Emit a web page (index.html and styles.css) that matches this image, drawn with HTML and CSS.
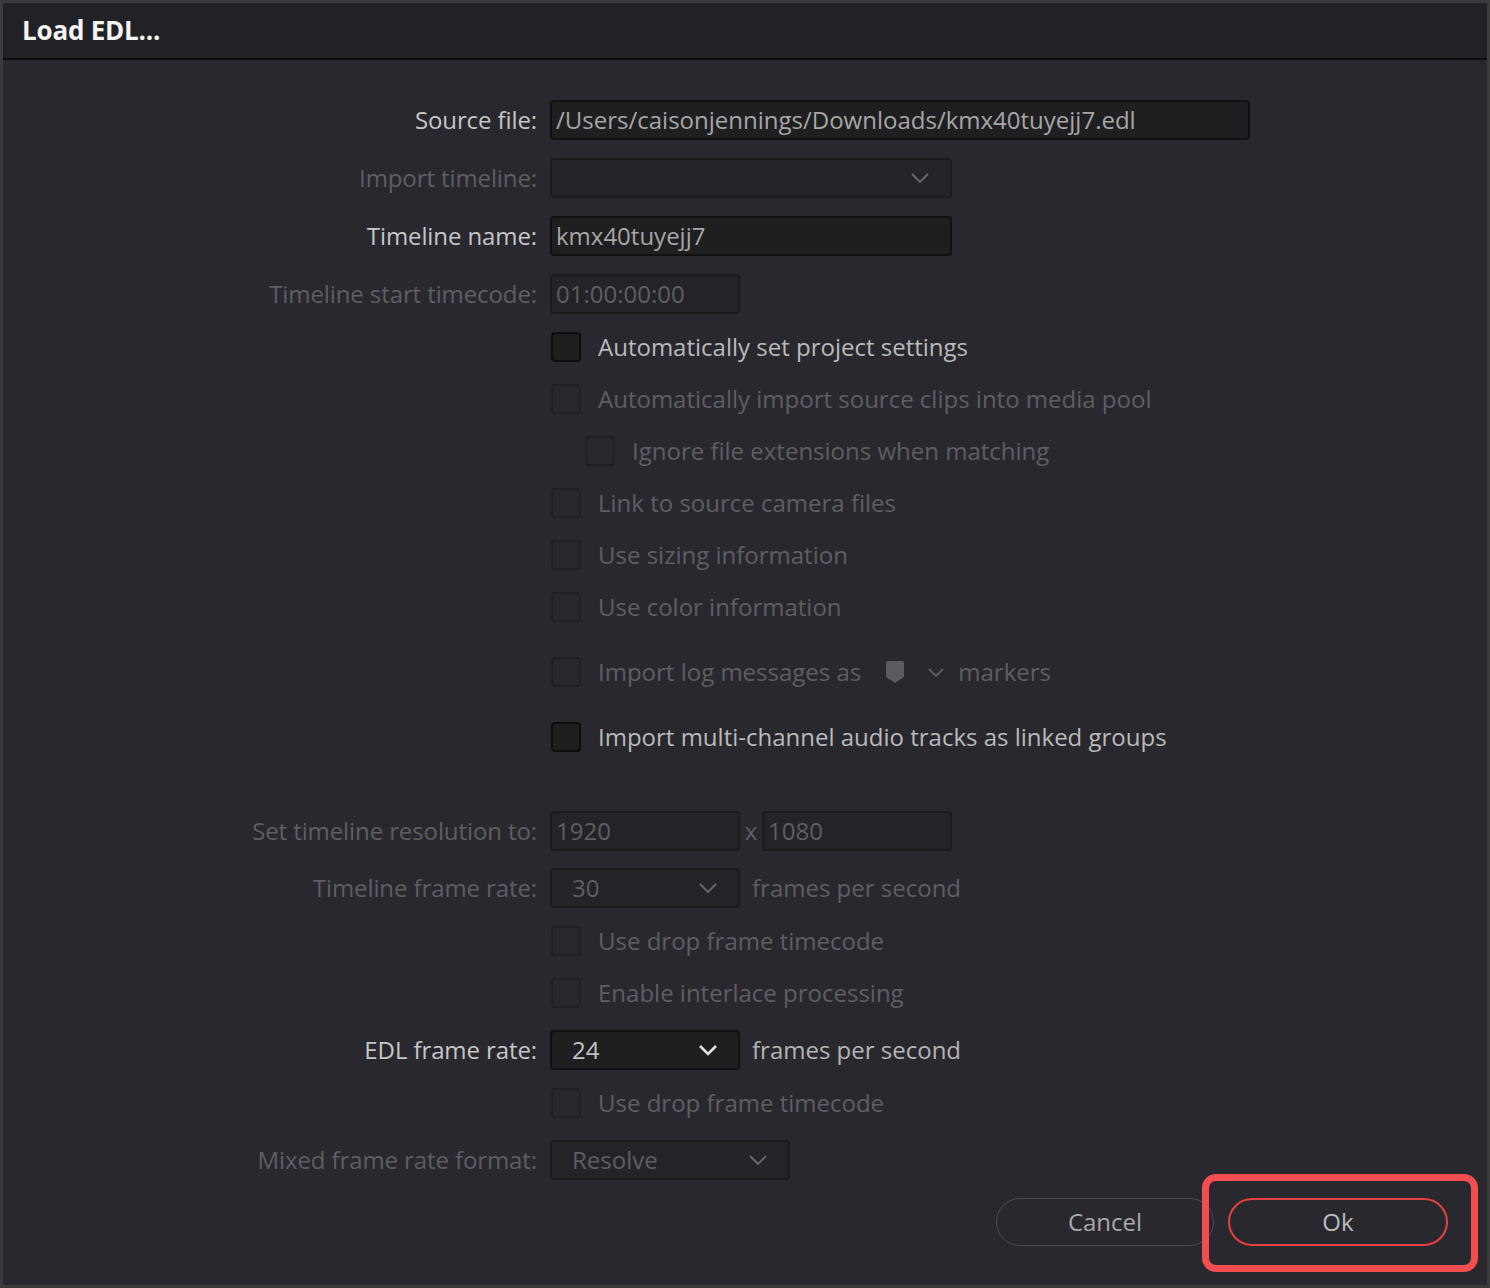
FILE: index.html
```html
<!DOCTYPE html>
<html>
<head>
<meta charset="utf-8">
<link rel="stylesheet" href="styles.css">
</head>
<body>
<div class="window">
  <div class="titlebar"><span class="title">Load EDL...</span></div>
  <div class="content">
    <div class="row field-row r-source">
      <div class="label">Source file:</div>
      <div class="input w-long">/Users/caisonjennings/Downloads/kmx40tuyejj7.edl</div>
    </div>
    <div class="row field-row r-gap">
      <div class="label dim">Import timeline:</div>
      <div class="select w-mid disabled"><span></span>
        <svg class="chev" width="20" height="12" viewBox="0 0 20 12"><path d="M2 2 L10 10 L18 2" fill="none" stroke="#6a6a6e" stroke-width="1.8"/></svg>
      </div>
    </div>
    <div class="row field-row r-gap">
      <div class="label">Timeline name:</div>
      <div class="input w-mid">kmx40tuyejj7</div>
    </div>
    <div class="row field-row r-gap">
      <div class="label dim">Timeline start timecode:</div>
      <div class="input w-short disabled">01:00:00:00</div>
    </div>

    <div class="checks c-first">
      <div class="check-row"><span class="box on"></span><span class="ctext">Automatically set project settings</span></div>
      <div class="check-row dim"><span class="box"></span><span class="ctext">Automatically import source clips into media pool</span></div>
      <div class="check-row dim indent"><span class="box"></span><span class="ctext">Ignore file extensions when matching</span></div>
      <div class="check-row dim"><span class="box"></span><span class="ctext">Link to source camera files</span></div>
      <div class="check-row dim"><span class="box"></span><span class="ctext">Use sizing information</span></div>
      <div class="check-row dim"><span class="box"></span><span class="ctext">Use color information</span></div>
      <div class="check-row dim c-sep"><span class="box"></span><span class="ctext">Import log messages as</span>
        <svg class="marker" width="20" height="24" viewBox="0 0 20 24"><path d="M3 1 H17 Q19 1 19 3 V17 L10 23 L1 17 V3 Q1 1 3 1 Z" fill="#5a5a60"/></svg>
        <svg class="mchev" width="18" height="10" viewBox="0 0 18 10"><path d="M2 2 L9 9 L16 2" fill="none" stroke="#5e5e64" stroke-width="1.8"/></svg>
        <span class="ctext">markers</span>
      </div>
      <div class="check-row c-sep"><span class="box on"></span><span class="ctext">Import multi-channel audio tracks as linked groups</span></div>
    </div>

    <div class="row field-row r-res">
      <div class="label dim">Set timeline resolution to:</div>
      <div class="input w-short disabled">1920</div>
      <span class="times dim">x</span>
      <div class="input w-short disabled">1080</div>
    </div>
    <div class="row field-row r-fps">
      <div class="label dim">Timeline frame rate:</div>
      <div class="select w-short disabled"><span>30</span>
        <svg class="chev" width="20" height="12" viewBox="0 0 20 12"><path d="M2 2 L10 10 L18 2" fill="none" stroke="#6a6a6e" stroke-width="1.8"/></svg>
      </div>
      <span class="after dim">frames per second</span>
    </div>
    <div class="checks c-tight">
      <div class="check-row dim"><span class="box"></span><span class="ctext">Use drop frame timecode</span></div>
      <div class="check-row dim"><span class="box"></span><span class="ctext">Enable interlace processing</span></div>
    </div>
    <div class="row field-row r-edl">
      <div class="label">EDL frame rate:</div>
      <div class="select w-short"><span>24</span>
        <svg class="chev" width="20" height="12" viewBox="0 0 20 12"><path d="M2 2 L10 10 L18 2" fill="none" stroke="#e2e2e2" stroke-width="2.6"/></svg>
      </div>
      <span class="after">frames per second</span>
    </div>
    <div class="checks c-tight2">
      <div class="check-row dim"><span class="box"></span><span class="ctext">Use drop frame timecode</span></div>
    </div>
    <div class="row field-row r-mixed">
      <div class="label dim">Mixed frame rate format:</div>
      <div class="select w-resolve disabled"><span>Resolve</span>
        <svg class="chev" width="20" height="12" viewBox="0 0 20 12"><path d="M2 2 L10 10 L18 2" fill="none" stroke="#6a6a6e" stroke-width="1.8"/></svg>
      </div>
    </div>

    <div class="buttons">
      <button class="btn cancel">Cancel</button>
      <div class="ok-wrap">
        <button class="btn ok">Ok</button>
        <div class="highlight"></div>
      </div>
    </div>
  </div>
</div>
</body>
</html>
```

FILE: styles.css
```css
html, body {
  margin: 0;
  padding: 0;
  background: #3a3a3c;
}
body {
  font-family: "Open Sans", "Noto Sans", sans-serif;
  width: 1490px;
  height: 1288px;
  overflow: hidden;
}
.window {
  box-sizing: border-box;
  width: 1490px;
  height: 1288px;
  border: 3px solid #3b3b3d;
  background: #28282e;
  display: flex;
  flex-direction: column;
}
.titlebar {
  height: 55px;
  background: #222226;
  border-bottom: 2px solid #0c0c0e;
  display: flex;
  align-items: center;
  padding-left: 19px;
  flex-shrink: 0;
}
.title {
  color: #f4f4f4;
  font-weight: 700;
  font-size: 26px;
  letter-spacing: -0.2px;
  margin-top: -2px;
}
.content {
  flex: 1;
  display: flex;
  flex-direction: column;
  position: relative;
}
.row {
  display: flex;
  align-items: center;
  height: 40px;
}
.r-source { margin-top: 40px; }
.r-gap { margin-top: 18px; }
.label {
  width: 534px;
  text-align: right;
  font-size: 24px;
  color: #c6c6c6;
  margin-right: 13px;
  flex-shrink: 0;
  letter-spacing: -0.1px;
  padding-bottom: 2px;
}
.dim .label, .label.dim { color: #5e5e63; }
.input, .select {
  box-sizing: border-box;
  height: 40px;
  background: #1f1f21;
  border: 2px solid #111113;
  border-radius: 4px;
  font-size: 24px;
  color: #a6a6a6;
  display: flex;
  align-items: center;
  padding-left: 4px;
  padding-bottom: 2px;
  white-space: nowrap;
}
.input.disabled, .select.disabled {
  background: #242428;
  border-color: #1b1b1e;
  color: #5e5e63;
}
.w-long { width: 700px; }
.w-mid { width: 402px; }
.w-short { width: 190px; }
.w-resolve { width: 240px; }
.select {
  justify-content: space-between;
  padding-left: 20px;
  padding-right: 20px;
  padding-bottom: 0;
}
.select span { color: inherit; padding-bottom: 2px; }
.select:not(.disabled) { color: #c2c2c2; }
.chev { display: block; }
.times {
  font-size: 24px;
  color: #5e5e63;
  width: 22px;
  text-align: center;
  padding-bottom: 2px;
}
.after {
  font-size: 24px;
  color: #b4b4b4;
  margin-left: 12px;
  padding-bottom: 2px;
}
.after.dim { color: #5e5e63; }

.checks {
  display: flex;
  flex-direction: column;
  padding-left: 548px;
}
.c-first { margin-top: 7px; }
.check-row {
  height: 52px;
  display: flex;
  align-items: center;
}
.check-row.c-sep { margin-top: 13px; }
.check-row.indent { padding-left: 34px; }
.box {
  box-sizing: border-box;
  width: 30px;
  height: 30px;
  border-radius: 4px;
  background: #28282c;
  border: 2px solid #202024;
  flex-shrink: 0;
  margin-right: 17px;
}
.box.on {
  background: #1f1f1f;
  border-color: #0d0d0e;
}
.ctext {
  font-size: 24px;
  color: #bababa;
  white-space: nowrap;
  padding-bottom: 2px;
}
.check-row.dim .ctext { color: #5e5e63; }
.marker { margin-left: 24px; margin-right: 22px; display: block; }
.mchev { margin-right: 13px; display: block; }

.r-res { margin-top: 48px; }
.r-fps { margin-top: 17px; }
.c-tight { margin-top: 7px; }
.r-edl { margin-top: 11px; }
.c-tight2 { margin-top: 7px; }
.r-mixed { margin-top: 11px; }

.buttons {
  display: flex;
  justify-content: flex-end;
  align-items: center;
  margin-top: 18px;
  padding-right: 39px;
  gap: 14px;
}
.btn {
  box-sizing: border-box;
  height: 48px;
  border-radius: 24px;
  background: transparent;
  font-family: "Open Sans", "Noto Sans", sans-serif;
  font-size: 24px;
  padding: 0 0 2px 0;
}
.cancel {
  width: 218px;
  border: 1.5px solid #4a4c52;
  color: #a8a8a8;
}
.ok-wrap { position: relative; }
.ok {
  width: 220px;
  border: 2px solid #e8403f;
  color: #bcbcbc;
  display: block;
}
.highlight {
  position: absolute;
  left: -26px;
  top: -24px;
  width: 276px;
  height: 98px;
  box-sizing: border-box;
  border: 7px solid #f24e50;
  border-radius: 14px;
  pointer-events: none;
}
```
